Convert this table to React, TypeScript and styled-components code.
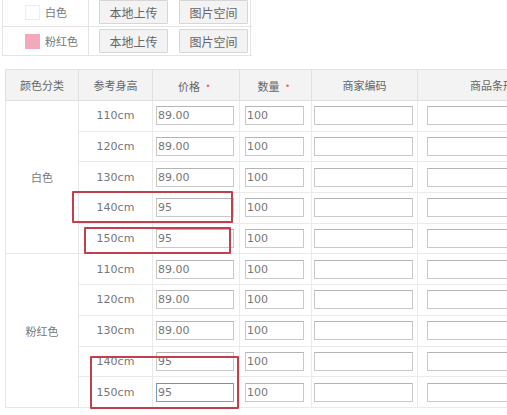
import React from 'react';
import styled, { createGlobalStyle } from 'styled-components';

const Global = createGlobalStyle`
  *, *::before, *::after { box-sizing: border-box; }
  html, body { margin: 0; padding: 0; background: #fff; }
  body {
    font-family: "DejaVu Sans", "Noto Sans CJK SC", sans-serif;
    overflow: hidden;
  }
`;

const Page = styled.div`
  position: relative;
  width: 507px;
  height: 415px;
  overflow: hidden;
  background: #fff;
`;

const ColorBlock = styled.div`
  display: grid;
  grid-template-columns: 86px 163px;
  grid-auto-rows: 29px;
  width: 249px;
  margin: -2px 0 0 2px;
  border-left: 1px solid #e4e4e4;
  border-right: 1px solid #e4e4e4;
`;

const SwatchCell = styled.div`
  display: flex;
  align-items: center;
  gap: 5px;
  padding-left: 22px;
  border-bottom: 1px solid #e4e4e4;
  border-right: 1px solid #e4e4e4;
  font-family: "Noto Sans CJK SC", sans-serif;
  font-size: 11px;
  color: #777;
`;

const Swatch = styled.span<{ $color: string }>`
  display: block;
  width: 15px;
  height: 15px;
  background: ${(p) => p.$color};
  border: 1px solid ${(p) => (p.$color === '#ffffff' ? '#eeeeee' : p.$color)};
`;

const ButtonCell = styled.div`
  display: flex;
  align-items: center;
  gap: 11px;
  padding-left: 10px;
  border-bottom: 1px solid #e4e4e4;
`;

const Btn = styled.button`
  width: 69px;
  height: 24px;
  padding: 0;
  background: #f3f3f3;
  border: 1px solid #d6d6d6;
  border-radius: 1px;
  font-family: "Noto Sans CJK SC", sans-serif;
  font-size: 12px;
  color: #666;
`;

const Table = styled.table`
  margin: 13px 0 0 5px;
  border-collapse: collapse;
  table-layout: fixed;
  width: 572px;
`;

const HeadCell = styled.th<{ $w: number }>`
  width: ${(p) => p.$w}px;
  height: 31px;
  padding: 0;
  background: #f3f3f3;
  border: 1px solid #e0e0e0;
  font-family: "Noto Sans CJK SC", sans-serif;
  font-weight: normal;
  font-size: 11px;
  color: #666;
  text-align: center;
  white-space: nowrap;
`;

const Req = styled.span`
  color: #ec6a7a;
  font-size: 12px;
  margin-left: 2px;
`;

const Row = styled.tr`
  height: 30.7px;
`;

const ColorCell = styled.td`
  padding: 0;
  border: 1px solid #e6e6e6;
  text-align: center;
  vertical-align: middle;
  font-family: "Noto Sans CJK SC", sans-serif;
  font-size: 11px;
  color: #777;
`;

const SizeCell = styled.td`
  padding: 0;
  border: 1px solid #eaeaea;
  text-align: center;
  font-size: 11px;
  color: #777;
`;

const InputCell = styled.td<{ $pad: number }>`
  padding: 0 0 0 ${(p) => p.$pad}px;
  border: 1px solid #eaeaea;
`;

const Field = styled.input<{ $w: number; $focus?: boolean }>`
  display: block;
  width: ${(p) => p.$w}px;
  height: 19px;
  padding: 0 0 0 1px;
  border: 1px solid ${(p) => (p.$focus ? '#7f9cbc' : '#c9c9c9')};
  border-top-color: ${(p) => (p.$focus ? '#7391b3' : '#b4b4b4')};
  background: #fff;
  font-family: "DejaVu Sans", sans-serif;
  font-size: 11px;
  color: #777;
  outline: none;
`;

const Mark = styled.div<{ $x: number; $y: number; $w: number; $h: number }>`
  position: absolute;
  left: ${(p) => p.$x}px;
  top: ${(p) => p.$y}px;
  width: ${(p) => p.$w}px;
  height: ${(p) => p.$h}px;
  border: 2px solid #c23f4e;
  border-radius: 1px;
  pointer-events: none;
`;

type Size = { h: string; price: string; focus?: boolean };

const groups: { name: string; sizes: Size[] }[] = [
  {
    name: '白色',
    sizes: [
      { h: '110cm', price: '89.00' },
      { h: '120cm', price: '89.00' },
      { h: '130cm', price: '89.00' },
      { h: '140cm', price: '95' },
      { h: '150cm', price: '95' },
    ],
  },
  {
    name: '粉红色',
    sizes: [
      { h: '110cm', price: '89.00' },
      { h: '120cm', price: '89.00' },
      { h: '130cm', price: '89.00' },
      { h: '140cm', price: '95' },
      { h: '150cm', price: '95', focus: true },
    ],
  },
];

const colors = [
  { name: '白色', color: '#ffffff' },
  { name: '粉红色', color: '#f3a9ba' },
];

export default function App() {
  return (
    <Page>
      <Global />
      <ColorBlock>
        {colors.map((c) => (
          <React.Fragment key={c.name}>
            <SwatchCell>
              <Swatch $color={c.color} />
              {c.name}
            </SwatchCell>
            <ButtonCell>
              <Btn>本地上传</Btn>
              <Btn>图片空间</Btn>
            </ButtonCell>
          </React.Fragment>
        ))}
      </ColorBlock>
      <Table>
        <thead>
          <tr>
            <HeadCell $w={73}>颜色分类</HeadCell>
            <HeadCell $w={74}>参考身高</HeadCell>
            <HeadCell $w={87}>
              价格<Req>•</Req>
            </HeadCell>
            <HeadCell $w={72}>
              数量<Req>•</Req>
            </HeadCell>
            <HeadCell $w={106}>商家编码</HeadCell>
            <HeadCell $w={160}>商品条形码</HeadCell>
          </tr>
        </thead>
        <tbody>
          {groups.map((g) =>
            g.sizes.map((s, i) => (
              <Row key={g.name + s.h}>
                {i === 0 && <ColorCell rowSpan={g.sizes.length}>{g.name}</ColorCell>}
                <SizeCell>{s.h}</SizeCell>
                <InputCell $pad={3}>
                  <Field $w={78} $focus={s.focus} defaultValue={s.price} />
                </InputCell>
                <InputCell $pad={5}>
                  <Field $w={59} defaultValue="100" />
                </InputCell>
                <InputCell $pad={2}>
                  <Field $w={99} defaultValue="" />
                </InputCell>
                <InputCell $pad={9}>
                  <Field $w={150} defaultValue="" />
                </InputCell>
              </Row>
            ))
          )}
        </tbody>
      </Table>
      <Mark $x={72} $y={191} $w={161} $h={32} />
      <Mark $x={84} $y={227} $w={147} $h={27} />
      <Mark $x={90} $y={356} $w={149} $h={53} />
    </Page>
  );
}
